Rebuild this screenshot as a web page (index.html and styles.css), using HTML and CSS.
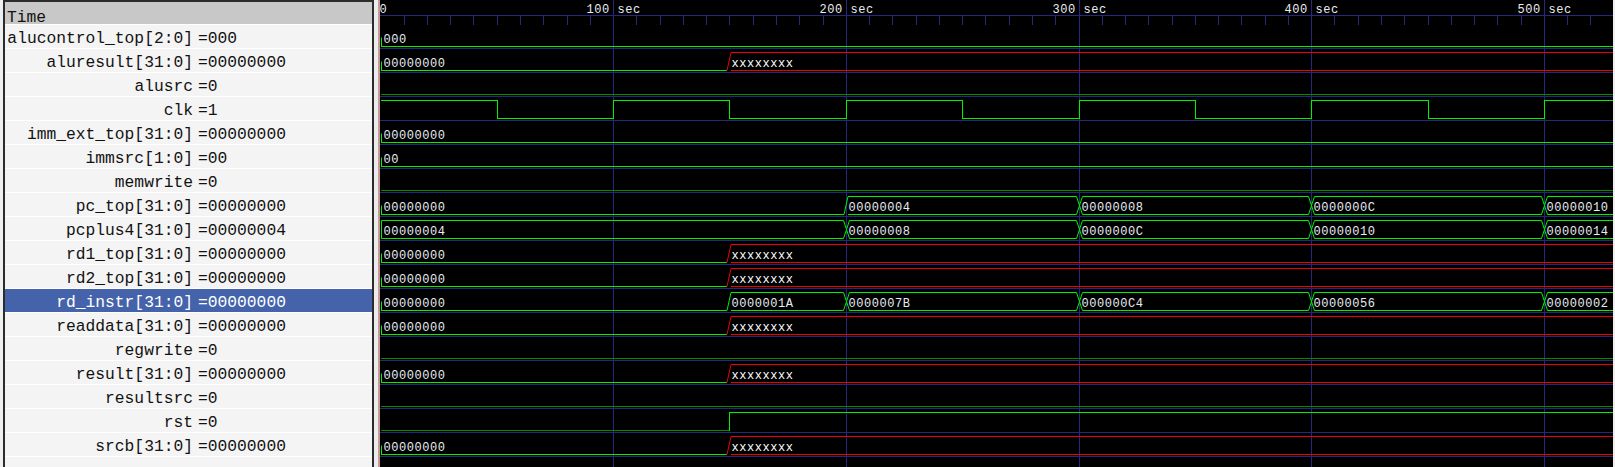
FILE: index.html
```html
<!DOCTYPE html>
<html>
<head>
<meta charset="utf-8">
<title>Waveform</title>
<link rel="stylesheet" href="styles.css">
</head>
<body>
<div class="app">
  <div class="signals">
    <div class="sig-header"><span class="hdr-text">Time</span></div>
    <div class="sig-row"><span class="name">alucontrol_top[2:0]</span><span class="val">=000</span></div>
    <div class="sig-row"><span class="name">aluresult[31:0]</span><span class="val">=00000000</span></div>
    <div class="sig-row"><span class="name">alusrc</span><span class="val">=0</span></div>
    <div class="sig-row"><span class="name">clk</span><span class="val">=1</span></div>
    <div class="sig-row"><span class="name">imm_ext_top[31:0]</span><span class="val">=00000000</span></div>
    <div class="sig-row"><span class="name">immsrc[1:0]</span><span class="val">=00</span></div>
    <div class="sig-row"><span class="name">memwrite</span><span class="val">=0</span></div>
    <div class="sig-row"><span class="name">pc_top[31:0]</span><span class="val">=00000000</span></div>
    <div class="sig-row"><span class="name">pcplus4[31:0]</span><span class="val">=00000004</span></div>
    <div class="sig-row"><span class="name">rd1_top[31:0]</span><span class="val">=00000000</span></div>
    <div class="sig-row"><span class="name">rd2_top[31:0]</span><span class="val">=00000000</span></div>
    <div class="sig-row sel"><span class="name">rd_instr[31:0]</span><span class="val">=00000000</span></div>
    <div class="sig-row"><span class="name">readdata[31:0]</span><span class="val">=00000000</span></div>
    <div class="sig-row"><span class="name">regwrite</span><span class="val">=0</span></div>
    <div class="sig-row"><span class="name">result[31:0]</span><span class="val">=00000000</span></div>
    <div class="sig-row"><span class="name">resultsrc</span><span class="val">=0</span></div>
    <div class="sig-row"><span class="name">rst</span><span class="val">=0</span></div>
    <div class="sig-row"><span class="name">srcb[31:0]</span><span class="val">=00000000</span></div>
    <div class="sig-fill"></div>
  </div>
  <div class="splitter"></div>
  <div class="waves"><svg id="wave" class="wave-svg" width="1234" height="467" xmlns="http://www.w3.org/2000/svg"></svg></div>
  <div class="edge"></div>
</div>
<script src="script.js"></script>
</body>
</html>
```

FILE: styles.css
```css
* { box-sizing: border-box; }
html, body { margin: 0; padding: 0; }
body { background: #efefef; overflow: hidden; width: 1615px; height: 467px; }
.app { display: flex; width: 1615px; height: 467px; }
.signals {
  margin-left: 3px;
  width: 371px;
  flex: none;
  border: 2px solid #2b2b2b;
  border-bottom: 0;
  background: #f4f4f4;
  display: flex;
  flex-direction: column;
  font-family: "Liberation Mono", "Courier New", monospace;
  font-size: 16.3px;
  color: #121212;
}
.sig-header {
  height: 22px;
  flex: none;
  background: #c8c8c8;
  padding: 0 0 0 2px;
  display: flex;
  align-items: flex-end;
}
.hdr-text { line-height: 12px; }
.sig-row {
  height: 24px;
  flex: none;
  border-top: 1px solid #ffffff;
  padding-top: 5px;
  line-height: 18px;
  display: flex;
  white-space: pre;
}
.sig-row.sel { background: #4563ab; color: #ffffff; }
.name { width: 188px; flex: none; text-align: right; }
.val { padding-left: 5px; }
.sig-fill { flex: 1; border-top: 1px solid #ffffff; }
.splitter { width: 5px; flex: none; background: #ececec; border-right: 1px solid #a8a8a8; }
.waves { width: 1234px; flex: none; height: 467px; background: #000000; }
.wave-svg { display: block; }
.wave-svg text {
  font-family: "Liberation Mono", "Courier New", monospace;
  font-size: 12px;
  letter-spacing: 0.55px;
}
.edge { width: 2px; flex: none; background: #efefef; }
```

FILE: script.js
```js
(function () {
  var NS = 'http://www.w3.org/2000/svg';
  var svg = document.getElementById('wave');
  var W = 1234, H = 467, OX = 379;
  var BLUE = '#27277f', G = '#00f000', DG = '#008c00', R = '#f00000';
  var TXT = '#e6ecf2', XT = '#ffffff', RUL = '#ececec';

  function px(t) { return Math.round(380.4 + 2.327 * t) - OX; }
  function el(tag, a) {
    var e = document.createElementNS(NS, tag);
    for (var k in a) e.setAttribute(k, a[k]);
    svg.appendChild(e);
    return e;
  }
  function hl(x1, x2, r, c) { el('line', { x1: x1, y1: r + 0.5, x2: x2, y2: r + 0.5, stroke: c }); }
  function vl(col, y1, y2, c) { el('line', { x1: col + 0.5, y1: y1, x2: col + 0.5, y2: y2, stroke: c }); }
  function pl(pts, c) {
    el('polyline', { points: pts.map(function (p) { return p.join(','); }).join(' '), fill: 'none', stroke: c });
  }
  function txt(x, y, s, c) { var e = el('text', { x: x, y: y, fill: c }); e.textContent = s; }

  // grid
  var t;
  for (t = 100; t <= 500; t += 100) vl(px(t), 0, H, BLUE);
  hl(0, W, 15, BLUE);
  for (t = 10; t < 530; t += 10) { if (t % 100) vl(px(t), 16, 25, BLUE); }
  for (var i = 0; i < 18; i++) hl(0, W, 48 + 24 * i, BLUE);

  // ruler labels
  txt(0.5, 13, '0', RUL);
  for (t = 100; t <= 500; t += 100) txt(px(t) + 0.5 - 27.1, 13, t + ' sec', RUL);

  function zx() { return [[0, '00000000', 'z'], [150, 'xxxxxxxx', 'x']]; }

  var rows = [
    { b: [[0, '000', 'z']] },
    { b: zx() },
    { s: [[0, 0]] },
    { s: [[0, 1], [50, 0], [100, 1], [150, 0], [200, 1], [250, 0], [300, 1], [350, 0], [400, 1], [450, 0], [500, 1]], lowc: G },
    { b: [[0, '00000000', 'z']] },
    { b: [[0, '00', 'z']] },
    { s: [[0, 0]] },
    { b: [[0, '00000000', 'z'], [200, '00000004', 'v'], [300, '00000008', 'v'], [400, '0000000C', 'v'], [500, '00000010', 'v']] },
    { b: [[0, '00000004', 'v'], [200, '00000008', 'v'], [300, '0000000C', 'v'], [400, '00000010', 'v'], [500, '00000014', 'v']] },
    { b: zx() },
    { b: zx() },
    { b: [[0, '00000000', 'z'], [150, '0000001A', 'v'], [200, '0000007B', 'v'], [300, '000000C4', 'v'], [400, '00000056', 'v'], [500, '00000002', 'v']] },
    { b: zx() },
    { s: [[0, 0]] },
    { b: zx() },
    { s: [[0, 0]] },
    { s: [[0, 0], [150, 1]] },
    { b: zx() }
  ];

  function bus(T, segs) {
    var hi = T + 4.5, lo = T + 22.5, mid = T + 13.5;
    segs.forEach(function (sg, k) {
      var xs = px(sg[0]);
      var label = sg[1], kind = sg[2];
      var nx = k + 1 < segs.length ? px(segs[k + 1][0]) : null;
      var prev = k > 0 ? segs[k - 1][2] : null;
      if (kind === 'z') {
        var xe = nx !== null ? nx - 2 : W;
        el('line', { x1: xs + 1, y1: lo, x2: xe, y2: lo, stroke: G });
        if (k === 0) el('line', { x1: xs + 1.5, y1: mid, x2: xs + 1.5, y2: lo, stroke: G });
        txt(xs + 3.5, T + 19, label, TXT);
      } else {
        var c = kind === 'x' ? R : G;
        var x0;
        if (k === 0) {
          el('line', { x1: xs + 1.5, y1: hi, x2: xs + 1.5, y2: lo, stroke: c });
          x0 = xs + 1.5;
        } else if (prev === 'z') {
          pl([[xs - 2, lo], [xs + 2, hi]], c);
          x0 = xs + 2;
        } else {
          pl([[xs + 3.5, hi], [xs + 0.5, mid], [xs + 3.5, lo]], c);
          x0 = xs + 3.5;
        }
        if (nx !== null) {
          pl([[x0, hi], [nx - 2.5, hi], [nx + 0.5, mid], [nx - 2.5, lo], [x0, lo]], c);
        } else {
          el('line', { x1: x0, y1: hi, x2: W, y2: hi, stroke: c });
          el('line', { x1: x0, y1: lo, x2: W, y2: lo, stroke: c });
        }
        txt(k === 0 ? xs + 3.5 : xs + 2.5, T + 19, label, kind === 'x' ? XT : TXT);
      }
    });
  }

  function bit(T, segs, lowc) {
    var hi = T + 4, lo = T + 22;
    segs.forEach(function (sg, k) {
      var xs = k === 0 ? px(0) + 1 : px(sg[0]);
      var last = k + 1 >= segs.length;
      var xe = last ? W : px(segs[k + 1][0]) + 1;
      var y = sg[1] ? hi : lo;
      hl(xs, xe, y, sg[1] ? G : lowc);
      if (!last) vl(px(segs[k + 1][0]), hi, lo + 1, G);
    });
  }

  rows.forEach(function (r, i) {
    var T = 24 + 24 * i;
    if (r.b) bus(T, r.b);
    else bit(T, r.s, r.lowc || DG);
  });

  // marker
  vl(0, 0, H, '#e88888');
})();
```
